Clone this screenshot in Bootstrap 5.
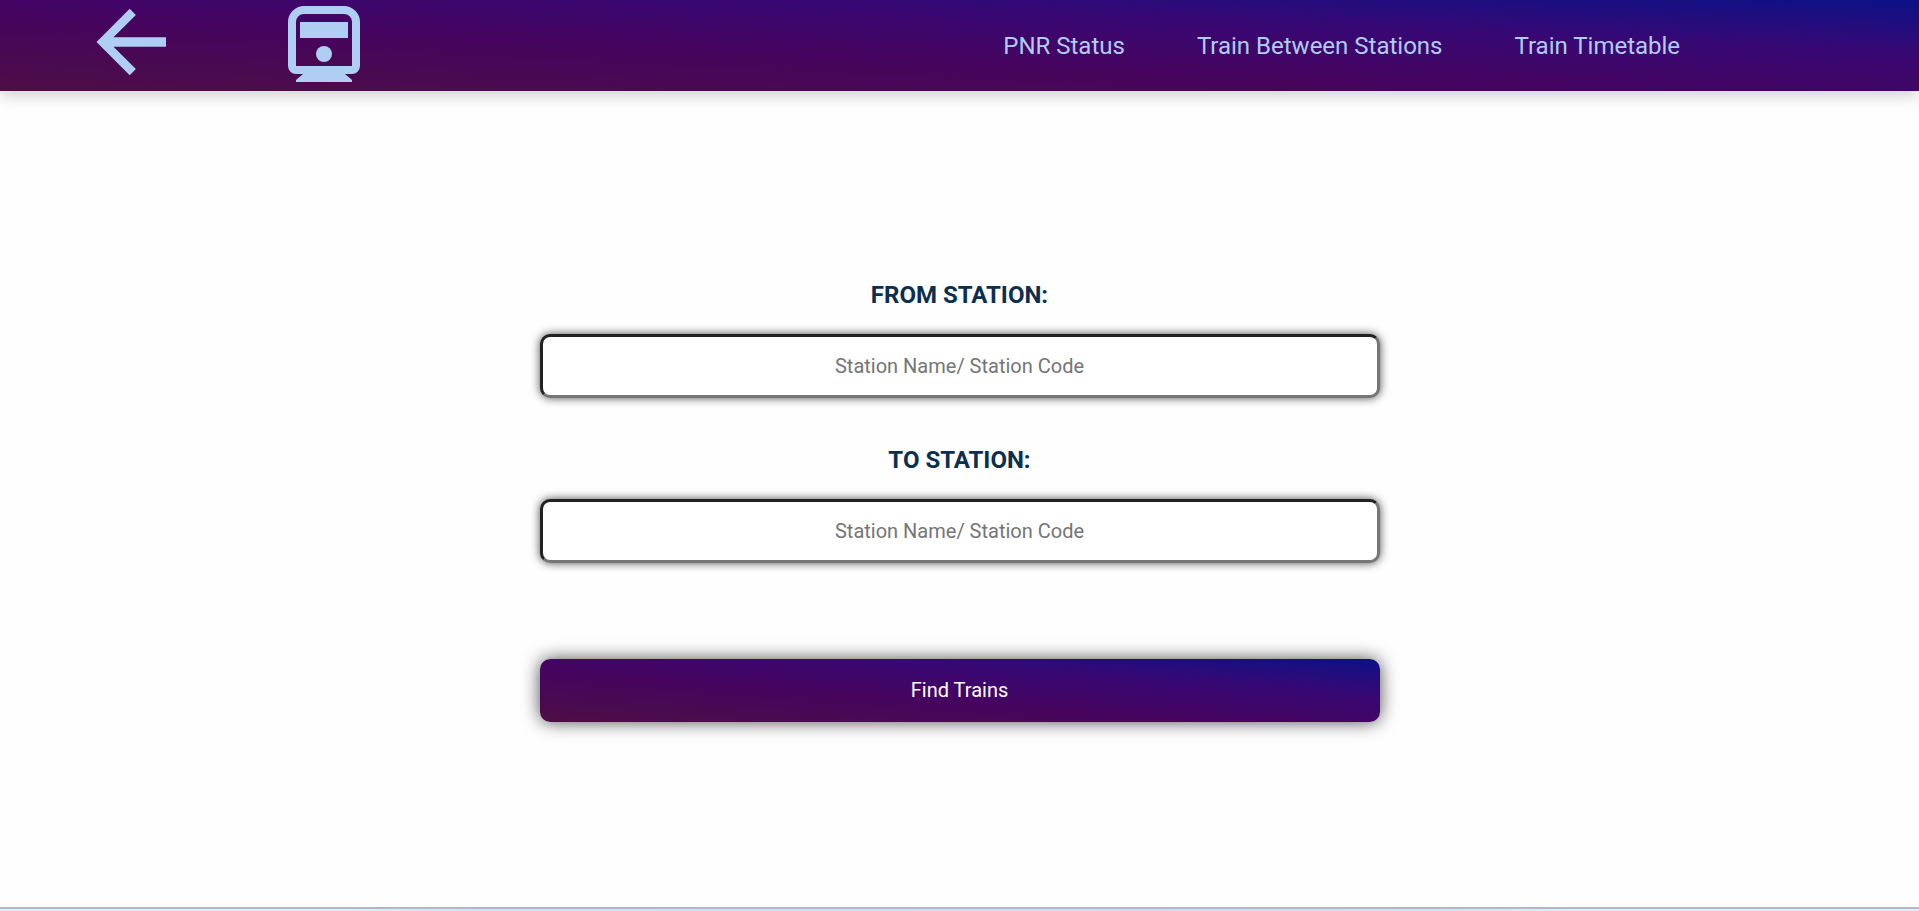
<!DOCTYPE html>
<html lang="en">
<head>
<meta charset="utf-8">
<meta name="viewport" content="width=device-width, initial-scale=1">
<title>Train Between Stations</title>
<link href="https://cdn.jsdelivr.net/npm/bootstrap@5.3.0/dist/css/bootstrap.min.css" rel="stylesheet">
<style>
  :root { --rail-gradient: linear-gradient(to top right, #4d0e45, #46045e 40%, #380874 70%, #0c1186); }
  body { font-family: Roboto, "Liberation Sans", sans-serif; background: #fefefe; }
  .topbar { padding: 0 12.45% 0 5%; background: var(--rail-gradient); box-shadow: 0 4px 16px rgba(0, 0, 0, .2); }
  .topbar a { color: #b0cdf4; }
  .topbar svg { display: block; fill: currentColor; }
  .brand-icons { gap: 120px; }
  .page-links { gap: 72px; font-size: 24px; line-height: 28px; }
  .search-area { padding-top: 190px; padding-bottom: 96px; }
  .search-form { max-width: 840px; }
  .field-label { font-size: 24px; line-height: 28px; font-weight: 700; color: #0b2f4e; margin-bottom: 25px; }
  .station-input { height: 64px; border: 3px inset #767676; border-radius: 10px; background: #fff; font-size: 20px; box-shadow: 0 0 10px rgba(0, 0, 0, .7); }
  .station-input::placeholder { color: #757575; opacity: 1; }
  .field-gap { margin-bottom: 48px; }
  .find-btn { height: 63px; margin-top: 96px; padding: 0 0 2px; border: 0; border-radius: 10px; color: #fff; font-size: 20px; background: var(--rail-gradient); box-shadow: 0 0 18px rgba(0, 0, 0, .7); }
  .page-end { height: 4px; border-top: 2px solid #b0bac5; background: linear-gradient(to right, #e2edf6 18%, #d6def6 25%, #d8daf4 60%, #d8def2 75%, #e2edf6 82%); }
</style>
</head>
<body class="d-flex flex-column min-vh-100">
<header class="topbar d-flex align-items-center justify-content-between position-relative">
  <div class="brand-icons d-flex align-items-center">
    <a href="#" aria-label="Back">
      <svg width="72" height="91" viewBox="96 0 72 91"><path d="M96.500 42L129.700 8.800L135.900 15L113.500 37.200H166V46.700H113.500L135.900 69L129.700 75.200Z"/></svg>
    </a>
    <a href="#" aria-label="Home">
      <svg width="72" height="91" viewBox="288 0 72 91"><path fill-rule="evenodd" d="M304 6H344A16 16 0 0 1 360 22V66A8 8 0 0 1 352 74H345L352 80V82H296V80L303 74H296A8 8 0 0 1 288 66V22A16 16 0 0 1 304 6ZM304 14A8 8 0 0 0 296 22V66H352V22A8 8 0 0 0 344 14Z"/><path d="M300 22H348V38H300Z"/><circle cx="324" cy="54" r="8"/></svg>
    </a>
  </div>
  <nav class="page-links d-flex">
    <a class="text-decoration-none" href="#">PNR Status</a>
    <a class="text-decoration-none" href="#">Train Between Stations</a>
    <a class="text-decoration-none" href="#">Train Timetable</a>
  </nav>
</header>
<main class="search-area flex-grow-1">
  <form class="search-form w-100 mx-auto d-flex flex-column text-center">
    <label class="field-label" for="from">FROM STATION:</label>
    <input class="station-input field-gap w-100 text-center" id="from" type="text" placeholder="Station Name/ Station Code">
    <label class="field-label" for="to">TO STATION:</label>
    <input class="station-input w-100 text-center" id="to" type="text" placeholder="Station Name/ Station Code">
    <button class="find-btn w-100" type="button">Find Trains</button>
  </form>
</main>
<footer class="page-end"></footer>
<script src="https://cdn.jsdelivr.net/npm/bootstrap@5.3.0/dist/js/bootstrap.bundle.min.js"></script>
</body>
</html>
